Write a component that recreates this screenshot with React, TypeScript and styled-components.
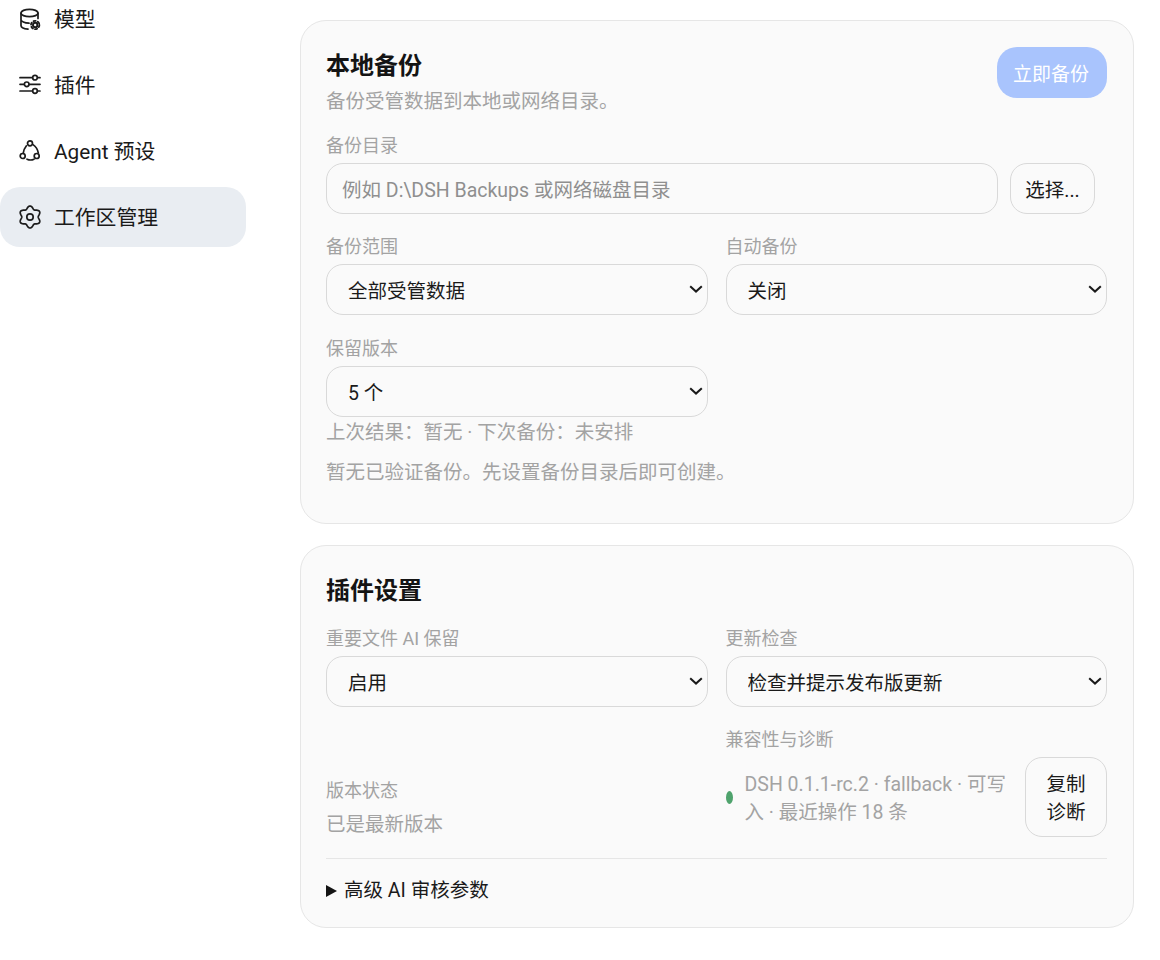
import React from 'react';
import styled, { createGlobalStyle } from 'styled-components';

const GlobalStyle = createGlobalStyle`
  html, body {
    margin: 0;
    padding: 0;
    height: 100%;
    overflow: hidden;
    background: #ffffff;
  }
  body, input, select, button {
    font-family: Roboto, "Noto Sans CJK SC", sans-serif;
  }
`;

// six rounded lobes, one pointing up
const gearPath = (() => {
  const pts: string[] = [];
  for (let i = 0; i < 120; i++) {
    const a = (i / 120) * Math.PI * 2;
    const r = 9.6 + 1.4 * Math.cos(6 * a);
    pts.push(`${(12 + r * Math.sin(a)).toFixed(2)} ${(12 - r * Math.cos(a)).toFixed(2)}`);
  }
  return `M${pts.join('L')}Z`;
})();

const DatabaseIcon = () => (
  <Icon viewBox="0 0 24 24">
    <ellipse cx="11.5" cy="6" rx="8.5" ry="3.7" />
    <path d="M3 6v12.5c0 2 3.5 3.4 7 3.7M3 12.5c0 2 3.5 3.7 8 3.7M20 6v5.5" />
    <circle cx="17.2" cy="18" r="2.2" strokeWidth="2" />
    <circle cx="17.2" cy="18" r="4.2" strokeWidth="1.8" strokeDasharray="2.2 2.2" />
  </Icon>
);

const SlidersIcon = () => (
  <Icon viewBox="0 0 24 24">
    <path d="M2 4.7h20M2 11.3h20M2 18h20" />
    <circle cx="17" cy="4.7" r="2.3" fill="#ffffff" />
    <circle cx="8.7" cy="11.3" r="2.3" fill="#ffffff" />
    <circle cx="17" cy="18" r="2.3" fill="#ffffff" />
  </Icon>
);

const AgentIcon = () => (
  <Icon viewBox="0 0 24 24">
    <circle cx="12" cy="4.3" r="2.5" />
    <circle cx="4.7" cy="17" r="2.5" />
    <circle cx="18.7" cy="17" r="2.5" />
    <path d="M8.4 6.8Q5.8 10 5.2 14.4M15 5.6Q19.4 8.6 20.3 14M9 20.2Q12.6 21.8 16 20.2" />
  </Icon>
);

const GearIcon = () => (
  <Icon viewBox="0 0 24 24">
    <path d={gearPath} />
    <circle cx="12" cy="12" r="3.2" />
  </Icon>
);

const navItems = [
  { label: '模型', icon: <DatabaseIcon /> },
  { label: '插件', icon: <SlidersIcon /> },
  { label: 'Agent 预设', icon: <AgentIcon /> },
  { label: '工作区管理', icon: <GearIcon />, active: true },
];

const Dropdown: React.FC<{ value: string }> = ({ value }) => (
  <SelectWrap>
    <Select defaultValue={value}>
      <option>{value}</option>
    </Select>
    <Chevron viewBox="0 0 14 8">
      <path d="M1.2 1.2L7 6.6l5.8-5.4" />
    </Chevron>
  </SelectWrap>
);

const App: React.FC = () => {
  return (
    <Page>
      <GlobalStyle />
      <Sidebar>
        {navItems.map((item) => (
          <NavItem key={item.label} $active={item.active}>
            {item.icon}
            <NavLabel>{item.label}</NavLabel>
          </NavItem>
        ))}
      </Sidebar>

      <Main>
        {/* 本地备份 */}
        <BackupCard>
          <CardHeader>
            <div>
              <Title>本地备份</Title>
              <Muted>备份受管数据到本地或网络目录。</Muted>
            </div>
            <PrimaryButton disabled>立即备份</PrimaryButton>
          </CardHeader>

          <Field>
            <Label>备份目录</Label>
            <DirRow>
              <TextInput placeholder="例如 D:\DSH Backups 或网络磁盘目录" />
              <GhostButton>选择...</GhostButton>
            </DirRow>
          </Field>

          <FieldGrid $rowGap={21}>
            <Field>
              <Label>备份范围</Label>
              <Dropdown value="全部受管数据" />
            </Field>
            <Field>
              <Label>自动备份</Label>
              <Dropdown value="关闭" />
            </Field>
            <Field>
              <Label>保留版本</Label>
              <Dropdown value="5 个" />
            </Field>
          </FieldGrid>

          <StatusLine>上次结果：暂无 · 下次备份：未安排</StatusLine>
          <HintLine>暂无已验证备份。先设置备份目录后即可创建。</HintLine>
        </BackupCard>

        {/* 插件设置 */}
        <PluginCard>
          <PluginTitle>插件设置</PluginTitle>
          <PluginGrid $rowGap={20}>
            <Field>
              <Label>重要文件 AI 保留</Label>
              <Dropdown value="启用" />
            </Field>
            <Field>
              <Label>更新检查</Label>
              <Dropdown value="检查并提示发布版更新" />
            </Field>
            <VersionField>
              <Label>版本状态</Label>
              <Muted>已是最新版本</Muted>
            </VersionField>
            <Field>
              <Label>兼容性与诊断</Label>
              <DiagRow>
                <Dot />
                <DiagText>DSH 0.1.1-rc.2 · fallback · 可写入 · 最近操作 18 条</DiagText>
                <CopyButton>复制诊断</CopyButton>
              </DiagRow>
            </Field>
          </PluginGrid>
          <Advanced>
            <Summary>高级 AI 审核参数</Summary>
          </Advanced>
        </PluginCard>
      </Main>
    </Page>
  );
};

const Page = styled.div`
  display: flex;
  height: 960px;
  overflow: hidden;
  color: #1a1a1a;
`;

const Sidebar = styled.nav`
  display: flex;
  flex-direction: column;
  gap: 6px;
  width: 246px;
  margin-top: -11px;
  flex-shrink: 0;
`;

const NavItem = styled.div<{ $active?: boolean }>`
  display: flex;
  align-items: center;
  gap: 12px;
  height: 60px;
  padding-left: 18px;
  box-sizing: border-box;
  border-radius: 20px;
  font-size: 20.8px;
  background: ${(p) => (p.$active ? '#e9edf2' : 'transparent')};
`;

const NavLabel = styled.span`
  padding-bottom: 2px;
`;

const Icon = styled.svg`
  width: 24px;
  height: 24px;
  flex-shrink: 0;
  fill: none;
  stroke: #1c1c1c;
  stroke-width: 1.7;
  stroke-linecap: round;
  stroke-linejoin: round;
`;

const Main = styled.main`
  display: flex;
  flex-direction: column;
  gap: 21px;
  width: 834px;
  margin: 20px 0 0 54px;
`;

const Card = styled.section`
  background: #fafafa;
  border: 1px solid #e6e6e6;
  border-radius: 26px;
  box-sizing: border-box;
  padding: 26px 26px 0 25px;
`;

const BackupCard = styled(Card)`
  height: 504px;
`;

const PluginCard = styled(Card)`
  height: 383px;
`;

const CardHeader = styled.div`
  display: flex;
  justify-content: space-between;
  align-items: flex-start;
  margin-bottom: 19px;
`;

const Title = styled.h2`
  margin: 3px 0 6px;
  font-size: 24px;
  line-height: 32px;
  font-weight: 700;
  color: #141414;
`;

const PluginTitle = styled(Title)`
  margin: 3px 0 19px;
`;

const Muted = styled.div`
  padding-top: 2px;
  font-size: 19.5px;
  line-height: 24px;
  color: #a3a3a3;
`;

const PrimaryButton = styled.button`
  width: 110px;
  height: 51px;
  border: 0;
  border-radius: 20px;
  background: #a9c4fd;
  color: #ffffff;
  font-size: 19px;
  font-weight: 400;
  padding: 0 2px 0 0;
`;

const Field = styled.div`
  display: flex;
  flex-direction: column;
  gap: 6px;
  min-width: 0;
`;

const VersionField = styled(Field)`
  justify-content: flex-end;
  gap: 9px;
`;

const Label = styled.label`
  padding-top: 2px;
  font-size: 18px;
  line-height: 22px;
  color: #a3a3a3;
`;

const DirRow = styled.div`
  display: flex;
  gap: 12px;
  margin-right: 12px;
`;

const TextInput = styled.input`
  flex: 1;
  min-width: 0;
  height: 51px;
  box-sizing: border-box;
  padding: 4px 15px 0;
  border: 1px solid #d9d9d9;
  border-radius: 17px;
  background: transparent;
  font-size: 19.5px;
  color: #1a1a1a;
  outline: none;

  &::placeholder {
    color: #8f8f8f;
    opacity: 1;
  }
`;

const GhostButton = styled.button`
  width: 85px;
  height: 51px;
  flex-shrink: 0;
  padding: 0;
  border: 1px solid #d9d9d9;
  border-radius: 17px;
  background: transparent;
  font-size: 19.5px;
  color: #1a1a1a;
`;

const FieldGrid = styled.div<{ $rowGap: number }>`
  display: grid;
  grid-template-columns: 1fr 1fr;
  column-gap: 18px;
  row-gap: ${(p) => p.$rowGap}px;
  margin-top: 20px;
`;

const PluginGrid = styled(FieldGrid)`
  margin-top: 0;
`;

const SelectWrap = styled.div`
  position: relative;
`;

const Select = styled.select`
  display: block;
  width: 100%;
  height: 51px;
  box-sizing: border-box;
  padding: 4px 30px 0 21px;
  border: 1px solid #d9d9d9;
  border-radius: 17px;
  background: transparent;
  appearance: none;
  font-size: 19.5px;
  color: #1a1a1a;
  outline: none;
`;

const Chevron = styled.svg`
  position: absolute;
  top: 21px;
  right: 5px;
  width: 14px;
  height: 8px;
  fill: none;
  stroke: #1a1a1a;
  stroke-width: 2;
  pointer-events: none;
`;

const StatusLine = styled(Muted)`
  margin-top: 2px;
`;

const HintLine = styled(Muted)`
  margin-top: 14px;
`;

const DiagRow = styled.div`
  display: flex;
  align-items: center;
  gap: 12px;
  height: 80px;
`;

const Dot = styled.span`
  width: 7px;
  height: 13px;
  border-radius: 50%;
  background: #4fa36d;
  flex-shrink: 0;
`;

const DiagText = styled.div`
  flex: 1;
  padding-top: 4px;
  font-size: 19.5px;
  line-height: 28px;
  color: #a3a3a3;
`;

const CopyButton = styled.button`
  width: 82px;
  height: 80px;
  flex-shrink: 0;
  padding: 4px 20px 0;
  border: 1px solid #d9d9d9;
  border-radius: 17px;
  background: transparent;
  font-size: 19.5px;
  line-height: 28px;
  color: #1a1a1a;
`;

const Advanced = styled.details`
  margin-top: 21px;
  padding-top: 19px;
  border-top: 1px solid #e6e6e6;
  font-size: 19.5px;
  line-height: 26px;
  color: #1a1a1a;
`;

const Summary = styled.summary`
  display: flex;
  align-items: center;
  gap: 7px;
  list-style: none;

  &::before {
    content: '';
    flex-shrink: 0;
    border-left: 11px solid #141414;
    border-top: 6px solid transparent;
    border-bottom: 6px solid transparent;
  }
`;

export default App;
